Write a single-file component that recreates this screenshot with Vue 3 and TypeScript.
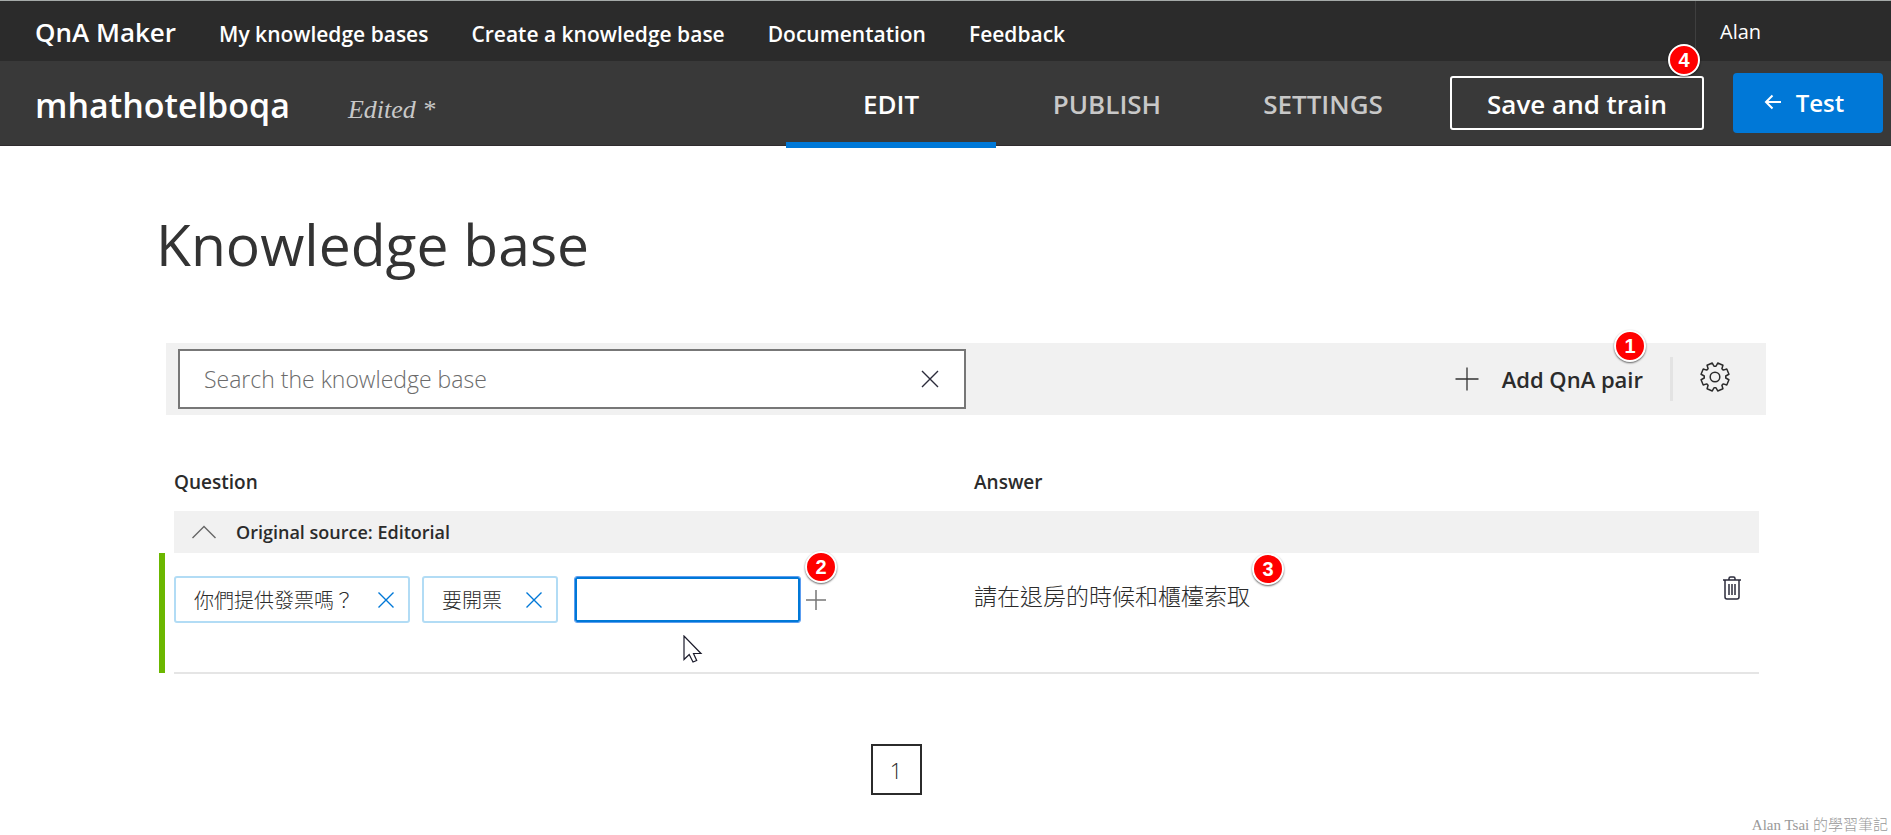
<script setup lang="ts">
import { ref } from 'vue'

interface Tab {
  id: string
  label: string
}

const navLinks: string[] = ['My knowledge bases', 'Create a knowledge base', 'Documentation', 'Feedback']
const tabs: Tab[] = [
  { id: 'edit', label: 'EDIT' },
  { id: 'publish', label: 'PUBLISH' },
  { id: 'settings', label: 'SETTINGS' },
]
const activeTab = ref<string>('edit')
const search = ref<string>('')
const draft = ref<string>('')
const expanded = ref<boolean>(true)
const questions = ref<string[]>(['你們提供發票嗎？', '要開票'])
const answer = ref<string>('請在退房的時候和櫃檯索取')

function addQuestion(): void {
  const text = draft.value.trim()
  if (text) {
    questions.value.push(text)
    draft.value = ''
  }
}

function removeQuestion(index: number): void {
  questions.value.splice(index, 1)
}

// Outline of an eight-toothed cog centred on (15, 15)
function cogPath(): string {
  const points: string[] = []
  const teeth = 8
  const profile: [number, number][] = [
    [-0.3, 10.8],
    [-0.2, 14.2],
    [0.2, 14.2],
    [0.3, 10.8],
  ]
  for (let i = 0; i < teeth; i++) {
    const base = ((i + 0.5) * 2 * Math.PI) / teeth
    for (const [offset, radius] of profile) {
      const a = base + offset
      points.push(`${(15 + radius * Math.cos(a)).toFixed(2)} ${(15 + radius * Math.sin(a)).toFixed(2)}`)
    }
  }
  return `M${points.join('L')}Z`
}
const cog = cogPath()
</script>

<template>
  <div class="page">
    <header>
      <nav class="topbar" aria-label="Site">
        <a class="brand" href="#">QnA Maker</a>
        <a v-for="link in navLinks" :key="link" class="nav-link" href="#">{{ link }}</a>
        <a class="user" href="#">Alan</a>
      </nav>
      <div class="kbbar">
        <div class="kb-title">
          <span class="kb-name">mhathotelboqa</span>
          <em class="kb-state">Edited *</em>
        </div>
        <div class="tabs" role="tablist">
          <button
            v-for="tab in tabs"
            :key="tab.id"
            type="button"
            role="tab"
            class="tab"
            :class="{ active: activeTab === tab.id }"
            :aria-selected="activeTab === tab.id"
            @click="activeTab = tab.id"
          >{{ tab.label }}</button>
        </div>
        <div class="save-wrap">
          <button type="button" class="save">Save and train</button>
          <span class="badge badge-save">4</span>
        </div>
        <button type="button" class="test">
          <svg width="18" height="16" viewBox="0 0 18 16" aria-hidden="true">
            <path d="M17 8H2M8.500 1.500L2 8L8.500 14.500" fill="none" stroke="currentColor" stroke-width="2" />
          </svg>
          Test
        </button>
      </div>
    </header>

    <main>
      <h1>Knowledge base</h1>

      <div class="toolbar">
        <div class="search">
          <input v-model="search" type="text" aria-label="Search the knowledge base" placeholder="Search the knowledge base" />
          <button type="button" class="icon-btn" aria-label="Clear search" @click="search = ''">
            <svg width="18" height="18" viewBox="0 0 18 18" aria-hidden="true">
              <path d="M1 1L17 17M17 1L1 17" fill="none" stroke="#2b2b3b" stroke-width="1.400" />
            </svg>
          </button>
        </div>
        <div class="add-wrap">
          <button type="button" class="add">
            <svg width="24" height="24" viewBox="0 0 24 24" aria-hidden="true">
              <path d="M12 0.500V23.500M0.500 12H23.500" fill="none" stroke="#333" stroke-width="1.300" />
            </svg>
            Add QnA pair
          </button>
          <span class="badge badge-add">1</span>
        </div>
        <button type="button" class="icon-btn gear" aria-label="View options">
          <svg width="30" height="30" viewBox="0 0 30 30" aria-hidden="true">
            <path :d="cog" fill="none" stroke="#2b2b2b" stroke-width="1.500" stroke-linejoin="round" />
            <circle cx="15" cy="15" r="4.800" fill="none" stroke="#2b2b2b" stroke-width="1.500" />
          </svg>
        </button>
      </div>

      <table>
        <thead>
          <tr>
            <th class="col-q" scope="col">Question</th>
            <th scope="col" colspan="2">Answer</th>
          </tr>
        </thead>
        <tbody>
          <tr class="group">
            <td colspan="3">
              <button type="button" class="group-btn" :aria-expanded="expanded" @click="expanded = !expanded">
                <svg width="24" height="14" viewBox="0 0 24 14" aria-hidden="true">
                  <path d="M0.500 13L12 1.500L23.500 13" fill="none" stroke="#666" stroke-width="1.400" />
                </svg>
                Original source: Editorial
              </button>
            </td>
          </tr>
          <tr v-if="expanded" class="pair">
            <td class="cell-q">
              <div class="chips">
                <span v-for="(question, index) in questions" :key="question" class="chip">
                  {{ question }}
                  <button type="button" class="icon-btn" :aria-label="'Remove ' + question" @click="removeQuestion(index)">
                    <svg width="16" height="16" viewBox="0 0 16 16" aria-hidden="true">
                      <path d="M0.500 0.500L15.500 15.500M15.500 0.500L0.500 15.500" fill="none" stroke="#0078d7" stroke-width="1.400" />
                    </svg>
                  </button>
                </span>
                <input v-model="draft" class="draft" type="text" aria-label="New question" @keyup.enter="addQuestion" />
                <div class="plus-wrap">
                  <button type="button" class="icon-btn" aria-label="Add question" @click="addQuestion">
                    <svg width="20" height="20" viewBox="0 0 20 20" aria-hidden="true">
                      <path d="M10 0V20M0 10H20" fill="none" stroke="#777" stroke-width="1.500" />
                    </svg>
                  </button>
                  <span class="badge badge-plus">2</span>
                </div>
              </div>
              <svg class="cursor" width="20" height="28" viewBox="0 0 20 28" aria-hidden="true">
                <path d="M1 1V24.500L6.200 19.500L10 27L13.700 25.500L10.500 18.500H18Z" fill="#fff" stroke="#1b1b2b" stroke-width="1.200" />
              </svg>
            </td>
            <td class="cell-a">
              <span class="answer">{{ answer }}<span class="badge badge-answer">3</span></span>
            </td>
            <td class="cell-del">
              <button type="button" class="icon-btn" aria-label="Delete pair">
                <svg width="20" height="24" viewBox="0 0 20 24" aria-hidden="true">
                  <path d="M1 4H19M7 4V2.500Q7 1 8.500 1H11.500Q13 1 13 2.500V4M3 4V21Q3 23 5 23H15Q17 23 17 21V4M7 8V19M10 8V19M13 8V19" fill="none" stroke="#2b2b3b" stroke-width="1.500" />
                </svg>
              </button>
            </td>
          </tr>
        </tbody>
      </table>

      <nav class="pager" aria-label="Pages">
        <button type="button" class="page-btn" aria-current="page">1</button>
      </nav>
    </main>

    <footer>Alan Tsai 的學習筆記</footer>
  </div>
</template>

<style>
body {
  margin: 0;
  background: #fff;
}
</style>

<style scoped>
.page {
  display: flex;
  flex-direction: column;
  min-height: 100vh;
  box-sizing: border-box;
  border-top: 1px solid #a5aaa8;
  font-family: "Open Sans", "Noto Sans CJK TC", sans-serif;
  color: #2b2b2b;
}
button,
input {
  box-sizing: border-box;
  font-family: inherit;
  color: inherit;
}
button {
  padding: 0;
  border: 0;
  background: none;
  cursor: pointer;
}
svg {
  display: block;
}
a {
  color: inherit;
  text-decoration: none;
}
.icon-btn {
  display: flex;
  flex: none;
}

.topbar {
  display: flex;
  align-items: baseline;
  gap: 43px;
  height: 60px;
  padding-left: 35px;
  background: #2b2b2b;
  color: #fff;
  line-height: 62px;
}
.brand {
  font-size: 26px;
  font-weight: 600;
}
.nav-link {
  font-size: 21px;
  font-weight: 600;
}
.user {
  box-sizing: border-box;
  width: 196px;
  height: 60px;
  margin-left: auto;
  padding-left: 24px;
  border-left: 1px solid #3f3f3f;
  font-size: 20px;
  align-self: flex-start;
}
.kbbar {
  display: flex;
  align-items: center;
  height: 85px;
  box-sizing: border-box;
  padding: 0 8px 0 35px;
  border-bottom: 1px solid #2f2b2e;
  background: #393939;
  color: #fff;
}
.kb-title {
  display: flex;
  align-items: baseline;
  gap: 58px;
  padding-top: 4px;
}
.kb-name {
  font-size: 34px;
  font-weight: 600;
}
.kb-state {
  font-family: "Liberation Serif", serif;
  font-size: 26px;
  color: #c8c8c8;
}
.tabs {
  display: flex;
  gap: 6px;
  margin-left: auto;
}
.tab {
  width: 210px;
  height: 87px;
  margin-top: 3px;
  padding-top: 4px;
  border-bottom: 6px solid transparent;
  font-size: 26px;
  font-weight: 600;
  color: #c8c8c8;
}
.tab.active {
  border-bottom-color: #0078d7;
  color: #fff;
}
.save-wrap,
.add-wrap,
.plus-wrap,
.answer {
  position: relative;
}
.save-wrap {
  margin: 0 29px 0 22px;
}
.save {
  width: 254px;
  height: 54px;
  padding-top: 2px;
  border: 2px solid #fff;
  border-radius: 3px;
  font-size: 26px;
  font-weight: 600;
}
.test {
  display: flex;
  align-items: center;
  justify-content: center;
  gap: 14px;
  width: 150px;
  height: 60px;
  padding: 0 8px 2px 0;
  border-radius: 4px;
  background: #0078d7;
  font-size: 24px;
  font-weight: 600;
}

.badge {
  position: absolute;
  width: 28px;
  height: 28px;
  border: 2px solid #fff;
  border-radius: 50%;
  background: #f00;
  box-shadow: 0 1px 2px rgba(0, 0, 0, 0.6);
  color: #fff;
  font: bold 20px/28px "Liberation Sans", sans-serif;
  text-align: center;
}
.badge-save {
  top: -32px;
  right: 4px;
}
.badge-add {
  top: -34px;
  right: -3px;
}
.badge-plus {
  top: -39px;
  left: -1px;
}
.badge-answer {
  top: -25px;
  left: 100%;
  margin-left: 2px;
}

main {
  padding: 0 132px 0 159px;
}
h1 {
  margin: 58px 0 0 -3px;
  font-size: 57px;
  line-height: 80px;
  font-weight: 400;
  color: #333;
}
.toolbar {
  display: flex;
  align-items: center;
  box-sizing: border-box;
  height: 72px;
  margin: 59px -7px 0 7px;
  padding: 0 12px;
  background: #f1f1f1;
}
.search {
  display: flex;
  align-items: center;
  box-sizing: border-box;
  width: 50%;
  height: 60px;
  padding: 0 25px 0 24px;
  border: 2px solid #777;
  background: #fff;
}
.search input {
  flex: 1;
  min-width: 0;
  padding: 0;
  border: 0;
  outline: 0;
  background: none;
  font-size: 23px;
  font-weight: 300;
}
.search input::placeholder {
  color: #6b6b6b;
  opacity: 1;
}
.add-wrap {
  margin-left: auto;
}
.add {
  display: flex;
  align-items: center;
  gap: 23px;
  font-size: 22px;
  font-weight: 600;
}
.gear {
  align-items: center;
  height: 44px;
  margin: 0 24px 0 27px;
  padding: 0 0 4px 27px;
  border-left: 3px solid #e3e3e3;
}

table {
  width: calc(100% - 15px);
  margin: 49px 0 0 15px;
  border-collapse: collapse;
}
th,
td {
  padding: 0;
  text-align: left;
}
th {
  height: 47px;
  vertical-align: top;
  font-size: 19px;
  line-height: 36px;
  font-weight: 600;
}
.col-q {
  width: 800px;
}
.group {
  background: #f1f1f1;
}
.group-btn {
  display: flex;
  align-items: center;
  gap: 20px;
  width: 100%;
  height: 42px;
  padding-left: 18px;
  font-size: 18px;
  font-weight: 600;
}
.pair td {
  box-sizing: border-box;
  height: 120px;
  border-bottom: 2px solid #e5e5e5;
  vertical-align: top;
}
.cell-q {
  position: relative;
}
.cell-q::before {
  content: "";
  position: absolute;
  top: 0;
  bottom: -1px;
  left: -15px;
  width: 6px;
  background: #6bb700;
}
.chips {
  display: flex;
  align-items: center;
  gap: 12px;
  margin-top: 23px;
}
.chip {
  display: flex;
  align-items: center;
  gap: 24px;
  box-sizing: border-box;
  height: 47px;
  padding: 0 14px 0 18px;
  border: 2px solid #b2dcf5;
  border-radius: 3px;
  font-family: "Noto Sans CJK TC", sans-serif;
  font-size: 20px;
  font-weight: 300;
}
.draft {
  width: 227px;
  height: 47px;
  margin-left: 4px;
  padding: 0 12px;
  border: 1px solid #5c9df0;
  border-radius: 3px;
  outline: 0;
  box-shadow: inset 0 0 0 2px #0078d7;
  font-size: 20px;
}
.plus-wrap {
  margin-left: -7px;
}
.cursor {
  position: absolute;
  top: 82px;
  left: 509px;
}
.cell-a {
  padding-top: 25px;
  font-family: "Noto Sans CJK TC", sans-serif;
  font-size: 23px;
  line-height: 34px;
  font-weight: 300;
}
.cell-del {
  width: 37px;
  padding-top: 23px;
}
.pager {
  display: flex;
  justify-content: center;
  margin-top: 70px;
  padding-right: 7px;
}
.page-btn {
  width: 51px;
  height: 51px;
  margin-right: 119px;
  border: 2px solid #2b2b2b;
  font-size: 22px;
  font-weight: 300;
}
footer {
  margin-top: auto;
  padding-right: 3px;
  font-family: "Liberation Serif", "Noto Sans CJK TC", serif;
  font-size: 15px;
  line-height: 20px;
  font-weight: 300;
  text-align: right;
  color: #999;
}
</style>
